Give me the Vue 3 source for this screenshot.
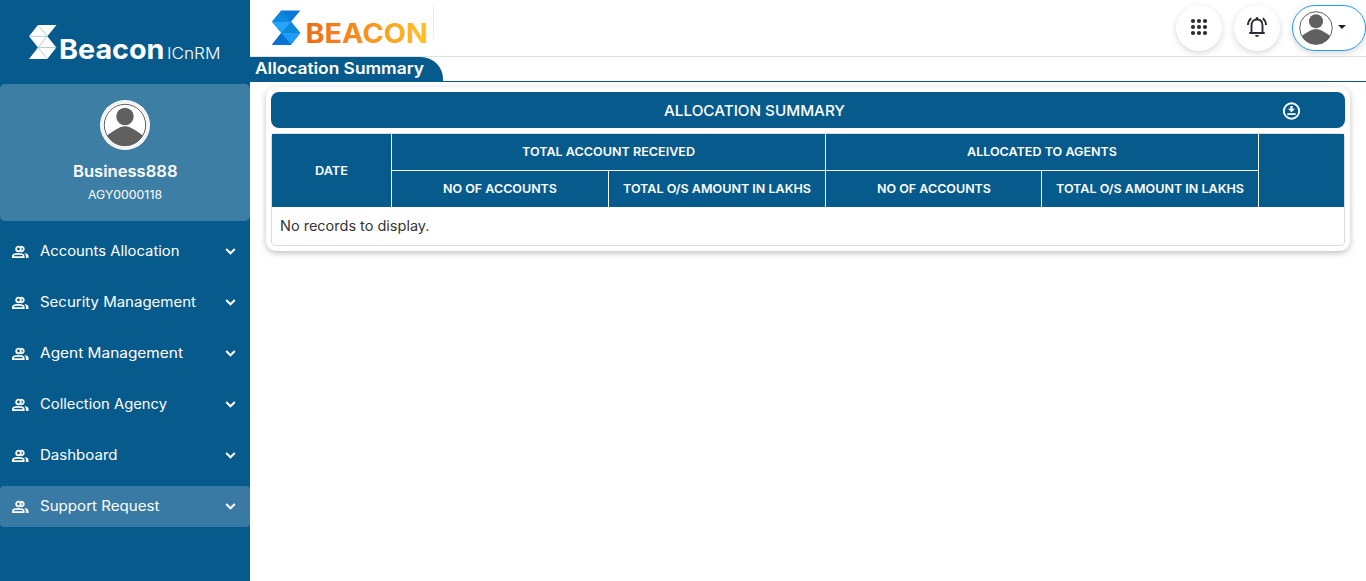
<script setup>
const menu = [
  { label: 'Accounts Allocation', width: 139.5 },
  { label: 'Security Management', width: 156 },
  { label: 'Agent Management', width: 143 },
  { label: 'Collection Agency', width: 127 },
  { label: 'Dashboard', width: 77.5 },
  { label: 'Support Request', width: 119.5, active: true },
]

const dots = [4, 10, 16]

const headings = [
  { text: 'DATE', width: 33, cls: 'date' },
  { text: 'TOTAL ACCOUNT RECEIVED', width: 173, cls: 'group' },
  { text: 'ALLOCATED TO AGENTS', width: 150, cls: 'group' },
  { text: '', width: 0, cls: 'blank' },
  { text: 'NO OF ACCOUNTS', width: 114, cls: '' },
  { text: 'TOTAL O/S AMOUNT IN LAKHS', width: 188, cls: '' },
  { text: 'NO OF ACCOUNTS', width: 114, cls: '' },
  { text: 'TOTAL O/S AMOUNT IN LAKHS', width: 188, cls: '' },
]
</script>

<template>
  <div class="page">
    <aside class="sidebar">
      <svg class="brand" width="250" height="84" viewBox="0 0 250 84">
        <path fill="#fff" d="M38 25H56.500L47.300 36.300L56.300 47.500L47.300 59H29L38 47.500L29 36.300Z" />
        <path fill="none" stroke="#8fbad3" stroke-width=".7" d="M29 36.300H47.300M38 47.500H56.300M38 25L47.300 36.300L38 47.500L47.300 59" />
        <text x="59" y="59" textLength="105.500" lengthAdjust="spacingAndGlyphs" font-size="27.500" font-weight="700">Beacon</text>
        <text x="167" y="59" textLength="53.500" lengthAdjust="spacingAndGlyphs" font-size="15.500" font-weight="300">ICnRM</text>
      </svg>

      <section class="profile">
        <svg class="photo" width="50" height="50" viewBox="0 0 50 50">
          <circle cx="25" cy="25" r="25" fill="#fff" />
          <circle cx="25" cy="25" r="23" fill="none" stroke="#dfe3e6" stroke-width=".8" />
          <circle cx="25" cy="25" r="20.700" fill="#fff" stroke="#606060" stroke-width="1" />
          <circle cx="25" cy="16.500" r="8.700" fill="#606060" />
          <path fill="#606060" d="M7 35.500C11.500 32.500 19 26.200 25 26.200S38.500 32.500 43 35.500A20.700 20.700 0 0 1 7 35.500Z" />
        </svg>
        <svg class="line name" width="104" height="22"><text x="0" y="17" textLength="104.500" lengthAdjust="spacingAndGlyphs">Business888</text></svg>
        <svg class="line code" width="74" height="18"><text x="0" y="13" textLength="74" lengthAdjust="spacingAndGlyphs">AGY0000118</text></svg>
      </section>

      <nav class="menu">
        <a v-for="item in menu" :key="item.label" class="item" :class="{ active: item.active }">
          <svg class="people" width="18" height="13" viewBox="0 0 18 13">
            <g fill="none" stroke="#fff" stroke-width="1.800">
              <circle cx="6.500" cy="4" r="2.300" />
              <path d="M.9 12.100V11.200C.9 9.500 4.200 8.900 6.300 8.900S11.700 9.500 11.700 11.200V12.100Z" />
              <path d="M8.800 1.800A2.300 2.300 0 1 1 8.800 6.200" />
            </g>
            <path fill="#fff" d="M12.300 8C15.300 8.400 16.500 9.500 16.500 11V13H13.900V11.200C13.900 9.900 13.400 8.900 12.300 8Z" />
          </svg>
          <svg class="line label" :width="item.width" height="24">
            <text x="0" y="16.500" :textLength="item.width" lengthAdjust="spacingAndGlyphs">{{ item.label }}</text>
          </svg>
          <svg class="chevron" width="11" height="7" viewBox="0 0 11 7">
            <path d="M1.200 1L5.500 5.300L9.800 1" fill="none" stroke="#fff" stroke-width="2" />
          </svg>
        </a>
      </nav>
    </aside>

    <main class="main">
      <header class="topbar">
        <svg class="logo" width="184" height="56" viewBox="0 0 184 56">
          <defs>
            <linearGradient id="flame">
              <stop offset="0" stop-color="#ed6b16" />
              <stop offset=".5" stop-color="#f6921d" />
              <stop offset="1" stop-color="#fec325" />
            </linearGradient>
          </defs>
          <path fill="#0a79d8" d="M31.300 10.500H50.300L41 21.700L50.300 33L41 44.700H22L31.300 33L22 21.700Z" />
          <path fill="#0b8add" d="M31.300 10.500L41 21.700H22ZM41 21.700L50.300 33H31.300ZM31.300 33L41 44.700H22Z" />
          <path fill="#27a4fb" d="M22 21.700H41L31.300 33Z" />
          <path fill="#1e9df5" d="M31.300 33H50.300L41 44.700Z" />
          <path fill="#0872d1" d="M31.300 33L41 44.700H22Z" />
          <text x="55.500" y="42.500" textLength="122.500" lengthAdjust="spacingAndGlyphs" font-size="27" font-weight="700" fill="url(#flame)">BEACON</text>
          <path d="M183.500 6V39" stroke="#ededed" />
        </svg>
        <div class="actions">
          <button class="round">
            <svg width="20" height="20" viewBox="0 0 20 20" fill="#2b2c33">
              <template v-for="y in dots" :key="y">
                <circle v-for="x in dots" :key="x" :cx="x" :cy="y" r="2.100" />
              </template>
            </svg>
          </button>
          <button class="round">
            <svg width="22" height="22" viewBox="0 0 22 22" fill="none" stroke="#2b2c33" stroke-width="1.900">
              <path d="M3.300 17H18.700M5.500 17V9.500C5.500 5.800 7.600 3.500 11 3.500S16.500 5.800 16.500 9.500V17" />
              <path d="M1.900 9C2.100 6.100 3.200 3.900 5.200 2.300M20.100 9C19.900 6.100 18.800 3.900 16.800 2.300" />
              <path d="M9.100 19A1.900 1.900 0 0 0 12.900 19ZM9.700 3A1.300 1.300 0 0 1 12.300 3" fill="#2b2c33" stroke="none" />
              <path d="M11 1.200V3.500" stroke-width="2.400" />
            </svg>
          </button>
          <button class="account">
            <svg width="34" height="34" viewBox="0 0 34 34">
              <circle cx="17" cy="17" r="16.300" fill="#fff" stroke="#606060" />
              <circle cx="17" cy="10.300" r="7" fill="#606060" />
              <path fill="#606060" d="M2.700 25C6.500 22.500 12.500 18 17 18S27.500 22.500 31.300 25A16.300 16.300 0 0 1 2.700 25Z" />
            </svg>
            <i class="caret"></i>
          </button>
        </div>
      </header>

      <div class="tabs">
        <div class="tab">
          <svg class="line tabtext" width="169" height="24"><text x="0" y="17" textLength="169" lengthAdjust="spacingAndGlyphs">Allocation Summary</text></svg>
        </div>
      </div>

      <section class="card">
        <div class="title">
          <svg class="line titletext" width="181" height="24"><text x="0" y="17.500" textLength="181" lengthAdjust="spacingAndGlyphs">ALLOCATION SUMMARY</text></svg>
          <svg class="download" width="19" height="18" viewBox="0 0 19 18">
            <circle cx="9.500" cy="9" r="7.700" fill="none" stroke="#fff" stroke-width="1.900" />
            <path fill="#fff" d="M8.300 4H10.700V6.700H13.100L9.500 10.300L5.900 6.700H8.300ZM5.300 11.300H13.700V13H5.300Z" />
          </svg>
        </div>
        <div class="table">
          <div class="head">
            <div v-for="(h, i) in headings" :key="i" class="cell" :class="h.cls">
              <svg v-if="h.text" class="line" :width="h.width" height="20">
                <text x="0" y="14" :textLength="h.width" lengthAdjust="spacingAndGlyphs">{{ h.text }}</text>
              </svg>
            </div>
          </div>
          <div class="empty">
            <svg class="line" width="149" height="24"><text x="0" y="17" textLength="149.500" lengthAdjust="spacingAndGlyphs">No records to display.</text></svg>
          </div>
        </div>
      </section>
    </main>
  </div>
</template>

<style>
body {
  background: #fff;
  overflow: hidden;
}
</style>

<style scoped>
.page {
  display: flex;
  height: 581px;
  font-family: Inter, "Open Sans", sans-serif;
}
svg {
  display: block;
  flex: none;
}
.line {
  overflow: visible;
  fill: #fff;
}
.sidebar {
  width: 250px;
  flex: none;
  background: #075b8c;
}
.brand {
  fill: #fff;
}
.profile {
  height: 137px;
  box-sizing: border-box;
  padding-top: 16px;
  border-radius: 5px;
  background: #3d7ea4;
  display: flex;
  flex-direction: column;
  align-items: center;
}
.name {
  margin-top: 10px;
  font-size: 15.500px;
  font-weight: 600;
}
.code {
  margin-top: 4px;
  font-size: 12px;
}
.menu {
  display: grid;
  gap: 10px;
  padding-top: 10px;
}
.item {
  display: flex;
  align-items: center;
  height: 41px;
  box-sizing: border-box;
  padding: 0 14px 0 12px;
  border-radius: 4px;
}
.item.active {
  background: #387aa3;
}
.people {
  margin-bottom: 1px;
}
.label {
  margin-left: 10px;
  margin-top: -1px;
  font-size: 14px;
}
.chevron {
  margin-left: auto;
}
.main {
  flex: 1;
  min-width: 0;
}
.topbar {
  height: 57px;
  box-sizing: border-box;
  border-bottom: 1px solid #e1e1e1;
  display: flex;
  justify-content: space-between;
}
.actions {
  display: flex;
  gap: 12px;
  padding-top: 5px;
}
.round,
.account {
  height: 46px;
  padding: 0;
  border: 0;
  background: #fff;
  display: flex;
  align-items: center;
  box-shadow: 0 2px 6px rgba(0, 0, 0, 0.16);
}
.round {
  width: 46px;
  border-radius: 50%;
  justify-content: center;
  padding-bottom: 2px;
}
.account {
  width: 74px;
  box-sizing: border-box;
  border: 1px solid #239df0;
  border-radius: 23px;
  padding-left: 6px;
}
.caret {
  margin: 0 0 2px 5px;
  border: 4px solid transparent;
  border-top-color: #222;
  border-bottom: 0;
}
.tabs {
  height: 25px;
  box-sizing: border-box;
  border-bottom: 1px solid #075b7f;
}
.tab {
  width: 193px;
  height: 25px;
  box-sizing: border-box;
  padding-left: 5px;
  background: #075b8c;
  border-top-right-radius: 22px;
}
.tabtext {
  font-size: 16px;
  font-weight: 600;
}
.card {
  margin: 5px 16px 0;
  height: 164px;
  box-sizing: border-box;
  padding: 5px;
  border-radius: 10px;
  background: #fff;
  box-shadow: 0 2px 6px rgba(0, 0, 0, 0.25);
}
.title {
  display: flex;
  align-items: center;
  height: 36px;
  border-radius: 8px;
  background: #075b8c;
}
.titletext {
  margin-left: 393px;
  font-size: 15px;
  font-weight: 500;
}
.download {
  margin-left: 437px;
  margin-top: 2px;
}
.table {
  margin-top: 5px;
  height: 113px;
  box-sizing: border-box;
  border: 1px solid #dadddf;
  border-radius: 4px;
}
.head {
  display: grid;
  grid-template-columns: 120px 217px 217px 216px 217px 85px;
  grid-template-rows: 37px 36px;
  background: #075b8c;
  font-size: 12px;
  font-weight: 600;
}
.cell {
  display: flex;
  align-items: center;
  justify-content: center;
  border-right: 1px solid #fff;
}
.date,
.blank {
  grid-row: span 2;
}
.blank {
  border-right: 0;
}
.group {
  grid-column: span 2;
  border-bottom: 1px solid #fff;
}
.empty {
  padding: 7px 8px 0;
  font-size: 14px;
}
.empty .line {
  fill: #333;
}
</style>
